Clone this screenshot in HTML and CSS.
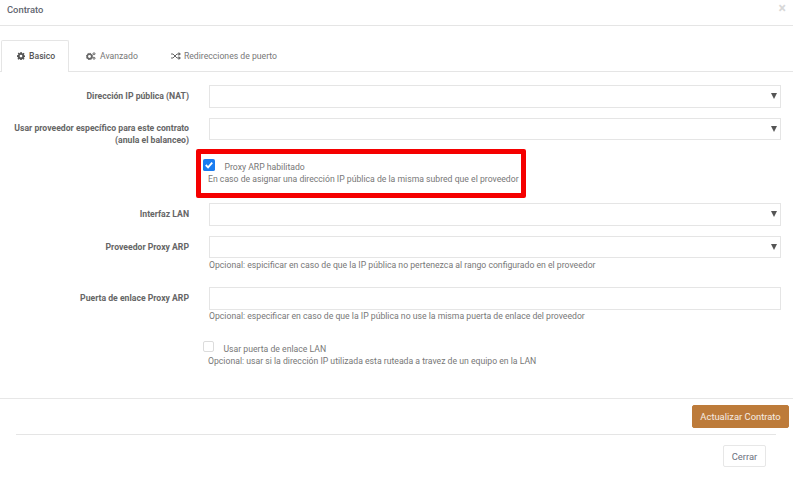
FILE: index.html
```html
<!DOCTYPE html>
<html lang="es">
<head>
<meta charset="utf-8">
<title>Contrato</title>
<link rel="stylesheet" href="styles.css">
</head>
<body>
<div class="modal">
  <header class="modal-header">
    <h4 class="modal-title">Contrato</h4>
    <span class="close">×</span>
  </header>
  <div class="modal-body">
    <ul class="tabs">
      <li class="tab active">
        <svg class="icon" viewBox="0 0 16 16"><path fill="#555" fill-rule="evenodd" d="M6.6 0h2.8l.4 2.2 1.3.6L13 1.5l2 2-1.3 1.9.5 1.3 2.2.4v2.8l-2.2.4-.5 1.3 1.3 1.9-2 2-1.9-1.3-1.3.5-.4 2.2H6.6l-.4-2.2-1.3-.5L3 15.5l-2-2 1.3-1.9-.5-1.3L0 9.9V6.6l2.2-.4.6-1.3L1.5 3l2-2 1.9 1.3 1.3-.5zM8 5.4a2.7 2.7 0 1 0 0 5.4 2.7 2.7 0 0 0 0-5.4z"/></svg>Basico
      </li>
      <li class="tab">
        <svg class="icon icon-wide" viewBox="0 0 20 16"><g fill="none" stroke="#666"><circle cx="7" cy="9" r="4.6" stroke-width="3.4"/><circle cx="7" cy="9" r="6.4" stroke-width="2" stroke-dasharray="2.5 2.5"/><circle cx="16" cy="3.5" r="2" stroke-width="2"/><circle cx="16" cy="12.5" r="2" stroke-width="2"/></g></svg>Avanzado
      </li>
      <li class="tab">
        <svg class="icon icon-wide icon-tight" viewBox="0 0 20 16"><g fill="none" stroke="#666" stroke-width="2"><path d="M0 4h4l8 8h4M0 12h4l8-8h4"/></g><path fill="#666" d="M15 0l5 4-5 4zM15 8l5 4-5 4z"/></svg>Redirecciones de puerto
      </li>
    </ul>
    <form class="form">
      <div class="row row-first">
        <label class="label">Dirección IP pública (NAT)</label>
        <div class="field"><div class="select"></div></div>
      </div>
      <div class="row row-provider">
        <label class="label">Usar proveedor específico para este contrato<br>(anula el balanceo)</label>
        <div class="field"><div class="select select-short"></div></div>
      </div>
      <div class="highlight">
        <div class="check-line">
          <svg class="checkbox" viewBox="0 0 13 13"><rect width="13" height="13" rx="2" fill="#1a7cf0"/><path d="M3 6.5l2.5 2.5L10 4" fill="none" stroke="#fff" stroke-width="2"/></svg>
          <span class="check-text">Proxy ARP habilitado</span>
        </div>
        <p class="help help-check">En caso de asignar una dirección IP pública de la misma subred que el proveedor</p>
      </div>
      <div class="row row-lan">
        <label class="label">Interfaz LAN</label>
        <div class="field"><div class="select"></div></div>
      </div>
      <div class="row row-proxy">
        <label class="label">Proveedor Proxy ARP</label>
        <div class="field">
          <div class="select select-short"></div>
          <p class="help">Opcional: espicificar en caso de que la IP pública no pertenezca al rango configurado en el proveedor</p>
        </div>
      </div>
      <div class="row row-gateway">
        <label class="label">Puerta de enlace Proxy ARP</label>
        <div class="field">
          <div class="input"></div>
          <p class="help help-tight">Opcional: especificar en caso de que la IP pública no use la misma puerta de enlace del proveedor</p>
        </div>
      </div>
      <div class="plain-check">
        <div class="check-line">
          <span class="checkbox checkbox-empty"></span>
          <span class="check-text">Usar puerta de enlace LAN</span>
        </div>
        <p class="help help-check">Opcional: usar si la dirección IP utilizada esta ruteada a travez de un equipo en la LAN</p>
      </div>
    </form>
  </div>
  <div class="form-footer">
    <button class="btn btn-primary" type="button">Actualizar Contrato</button>
  </div>
  <footer class="modal-footer">
    <button class="btn btn-default" type="button">Cerrar</button>
  </footer>
</div>
</body>
</html>
```
FILE: styles.css
```css
* { box-sizing: border-box; }
html, body { margin: 0; padding: 0; }
body {
  width: 793px;
  height: 492px;
  overflow: hidden;
  background: #fff;
  font-family: Roboto, "Liberation Sans", sans-serif;
  font-size: 8.66px;
  color: #6b7280;
}
.modal-header {
  height: 26px;
  border-bottom: 1px solid #e5e5e5;
  display: flex;
  justify-content: space-between;
  padding: 3px 7px 0 7px;
}
.modal-title { margin: 0; font-size: 9.4px; font-weight: 500; line-height: 13px; color: #5f6670; }
.close { font-size: 14px; line-height: 11px; font-weight: 700; color: #d8d8d8; }
.modal-body { padding: 14px 0 0; height: 373px; border-bottom: 1px solid #e7e7e7; }
.tabs {
  list-style: none;
  margin: 0;
  padding: 0 0 0 1px;
  display: flex;
  height: 32px;
  border-bottom: 1px solid #e5e5e5;
}
.tab {
  height: 32px;
  padding: 0 16px 2px;
  display: flex;
  align-items: center;
  color: #777;
  border: 1px solid transparent;
  border-bottom: 0;
}
.tab.active {
  width: 68px;
  padding: 0 0 2px 15px;
  color: #555;
  font-weight: 500;
  border-color: #e5e5e5;
  border-radius: 2px 2px 0 0;
  background: #fff;
}
.icon { width: 8px; height: 8px; margin-right: 4px; flex: none; }
.icon-wide { width: 10px; }
.icon-tight { margin-right: 3px; }
.tab:nth-child(2) { padding-right: 15px; }
.form { display: block; padding: 13px 12px 0 0; }
.row { display: flex; }
.label {
  width: 189px;
  flex: none;
  text-align: right;
  font-weight: 700;
  color: #666;
  line-height: 12px;
}
.field { margin-left: 20px; flex: 1; }
.select, .input {
  height: 23px;
  border: 1px solid #e5e5e5;
  position: relative;
}
.select-short { height: 22px; }
.select::after {
  content: "";
  position: absolute;
  right: 3px;
  top: 7px;
  border-left: 3px solid transparent;
  border-right: 3px solid transparent;
  border-top: 6px solid #555;
}
.row-first .label { padding-top: 5px; }
.row-provider { margin-top: 10px; }
.row-provider .label { padding-top: 4px; }
.highlight {
  width: 330px;
  height: 49px;
  margin: 3px 0 5px 196px;
  border: 5px solid #f50000;
  border-radius: 2px;
  padding: 5px 0 0 2px;
}
.check-line { display: flex; align-items: flex-start; height: 14px; }
.checkbox { width: 12px; height: 12px; flex: none; }
.checkbox-empty { width: 11px; height: 11px; border: 1px solid #dcdcdc; border-radius: 2px; display: block; }
.check-text { margin: 2px 0 0 9.5px; line-height: 13px; color: #777; }
.help { margin: 0; line-height: 12px; color: #777; padding-top: 1px; }
.help-tight { padding-top: 0; }
.help-check { padding: 0 0 0 5px; }
.row-lan .label { padding-top: 5px; }
.row-proxy { margin-top: 10px; }
.row-proxy .label { padding-top: 5px; }
.row-gateway { margin-top: 16px; }
.row-gateway .label { padding-top: 5px; }
.plain-check { margin: 19px 0 0 203px; }
.plain-check .help-check { padding-left: 6px; margin-left: -1px; }
.form-footer { display: flex; justify-content: flex-end; padding: 6px 4px 0 0; height: 35px; }
.btn {
  font-family: inherit;
  font-size: 9.4px;
  border-radius: 2px;
  padding: 0;
}
.btn-primary {
  width: 97px;
  height: 23px;
  background: #bd7b3a;
  border: 1px solid #bd7b3a;
  color: #f6ede4;
}
.modal-footer {
  margin: 0 17px 0 16px;
  border-top: 1px solid #e5e5e5;
  display: flex;
  justify-content: flex-end;
  padding: 10px 10px 0 0;
}
.btn-default {
  width: 43px;
  height: 22px;
  background: #fff;
  border: 1px solid #e7e7e7;
  color: #6b7280;
}
```
